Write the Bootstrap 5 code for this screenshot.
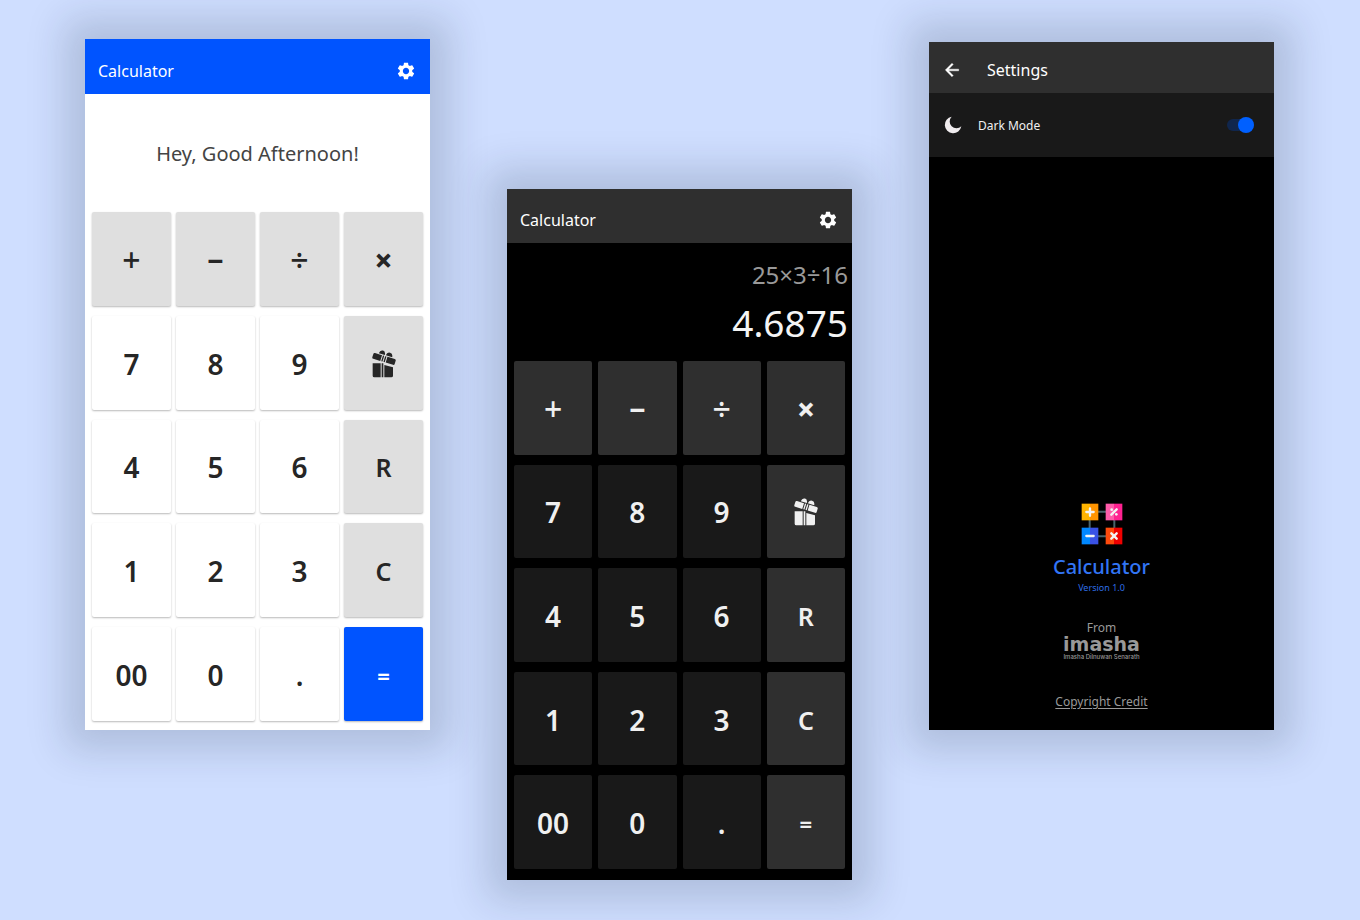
<!DOCTYPE html>
<html lang="en">
<head>
<meta charset="utf-8">
<meta name="viewport" content="width=device-width, initial-scale=1">
<title>Calculator</title>
<link href="https://cdn.jsdelivr.net/npm/bootstrap@5.3.0/dist/css/bootstrap.min.css" rel="stylesheet">
<style>
body{background:#cfdeff;font-family:"Noto Sans",sans-serif;color:#262626}
.stage{display:grid;grid-template-columns:repeat(3,minmax(0,1fr));column-gap:77px;padding:39px 86px 40px 85px;align-items:start}
.phone{background:#fff;box-shadow:0 0 36px 20px rgba(19,34,55,.17)}
.phone-night{background:#000;color:#f0f0f0}
.phone-lower{margin-top:150px}
.phone-settings{margin-top:3px;min-height:688px}
.bar{background:#0054ff;color:#fff;padding:20px 14px 11px 13px;font-size:16px;line-height:24px}
.phone-night .bar{background:#2f2f2f;padding-top:19px}
.phone-settings .bar{padding:16px 14px 11px 13px;column-gap:25px}
.bar-title{font-size:16px;line-height:24px;font-weight:400}
.plain{background:none;border:0;padding:0;color:inherit;display:flex}
.screen{min-height:118px}
.greeting{font-size:20px;color:#444;padding-top:2px}
.readout{padding:16px 4px 14px;text-align:right}
.history{font-size:24px;line-height:32px;color:#999}
.result{font-size:37px;line-height:48px;margin-top:8px;color:#f4f4f4}
.keys{display:grid;grid-template-columns:repeat(4,1fr);grid-template-rows:repeat(5,1fr);gap:10px 5px;padding:0 7px;margin-bottom:9px;min-height:509px}
.phone-night .keys{column-gap:6px;margin-bottom:11px;min-height:508px}
.key{border:0;border-radius:2px;padding:2px 0 0;background:#fff;color:#262626;font-size:28px;line-height:36px;font-weight:600;box-shadow:0 1px 2px rgba(0,0,0,.28);display:flex;align-items:center;justify-content:center}
.key-op{background:#dfdfdf}
.key-sign{font-size:32px;font-weight:500}
.key-bold{font-weight:800}
.key-letter{font-size:25px}
.key-equal{background:#0054ff;color:#fff;font-size:22px;font-weight:700}
.phone-night .key{background:#191919;color:#f0f0f0;box-shadow:none}
.phone-night .key-op,.phone-night .key-equal{background:#2f2f2f}
.setting{background:#191919;min-height:64px;padding:0 20px 0 15px;font-size:12px}
.setting label{padding-top:2px}
.toggle{appearance:none;position:relative;width:27px;height:12px;margin:0;border-radius:6px;background:#10264d}
.toggle::before{content:"";position:absolute;right:0;top:-2px;width:16px;height:16px;border-radius:50%;background:#0060ff}
.toggle:not(:checked)::before{right:auto;left:0;background:#aaa}
.about{color:#999;padding-bottom:20px}
.app-name{font-size:20px;line-height:28px;font-weight:500;color:#3275f5;margin:8px 0 0}
.version{font-size:9px;line-height:14px;color:#2f6ee6}
.from{font-size:12px;line-height:14px;margin-top:26px}
.maker{font-family:"DejaVu Sans",sans-serif;font-weight:700;font-size:19px;line-height:18px}
.maker-full{font-family:Inter,sans-serif;font-size:6px;line-height:8px;font-weight:500}
.credit{font-size:12px;line-height:16px;margin-top:33px;color:#999;text-underline-offset:2px}
</style>
</head>
<body>
<svg class="d-none" aria-hidden="true">
<symbol id="gear" viewBox="0 0 24 24"><path fill="currentColor" d="M19.43 12.98c.04-.32.07-.64.07-.98s-.03-.66-.07-.98l2.11-1.65c.19-.15.24-.42.12-.64l-2-3.46c-.12-.22-.39-.3-.61-.22l-2.49 1c-.52-.4-1.08-.73-1.69-.98l-.38-2.65C14.46 2.18 14.25 2 14 2h-4c-.25 0-.46.18-.49.42l-.38 2.65c-.61.25-1.17.59-1.69.98l-2.49-1c-.23-.09-.49 0-.61.22l-2 3.46c-.13.22-.07.49.12.64l2.11 1.65c-.04.32-.07.65-.07.98s.03.66.07.98l-2.11 1.65c-.19.15-.24.42-.12.64l2 3.46c.12.22.39.3.61.22l2.49-1c.52.4 1.08.73 1.69.98l.38 2.65c.03.24.24.42.49.42h4c.25 0 .46-.18.49-.42l.38-2.65c.61-.25 1.17-.59 1.69-.98l2.49 1c.23.09.49 0 .61-.22l2-3.46c.12-.22.07-.49-.12-.64l-2.11-1.65zM12 15.8c-2.1 0-3.8-1.7-3.8-3.8s1.7-3.8 3.8-3.8 3.8 1.7 3.8 3.8-1.7 3.8-3.8 3.8z"/></symbol>
<symbol id="gift" viewBox="0 0 72 84"><g fill="currentColor">
<path d="M2 40h24v42H7q-5 0-5-5zM29 40h5v42h-5zM37 45l26 7v25q0 5-5 5H37z"/>
<g transform="rotate(17 37 27)"><path d="M5 18h22v18H5q-4 0-4-4V22q0-4 4-4zM30 18h4v18h-4zM37 18h4v18h-4zM44 18h23q4 0 4 4v10q0 4-4 4H44z"/>
<path d="M16 15q1-11 10-11 8 0 9 11zM38 15q1-11 10-11 9 0 10 11z"/></g></g></symbol>
</svg>

<main class="stage">
<section class="phone" aria-label="Calculator, light">
<header class="bar d-flex align-items-center justify-content-between"><span class="bar-title">Calculator</span><button class="plain" type="button" aria-label="Settings"><svg width="20" height="20"><use href="#gear"/></svg></button></header>
<div class="screen greeting d-flex align-items-center justify-content-center">Hey, Good Afternoon!</div>
<div class="keys">
<button class="key key-op key-sign">+</button><button class="key key-op key-bold">−</button><button class="key key-op key-sign">÷</button><button class="key key-op key-sign key-bold">×</button>
<button class="key">7</button><button class="key">8</button><button class="key">9</button><button class="key key-op" aria-label="Gift"><svg width="24" height="28"><use href="#gift"/></svg></button>
<button class="key">4</button><button class="key">5</button><button class="key">6</button><button class="key key-op key-letter">R</button>
<button class="key">1</button><button class="key">2</button><button class="key">3</button><button class="key key-op key-letter">C</button>
<button class="key">00</button><button class="key">0</button><button class="key">.</button><button class="key key-equal">=</button>
</div>
</section>

<section class="phone phone-night phone-lower" aria-label="Calculator, dark">
<header class="bar d-flex align-items-center justify-content-between"><span class="bar-title">Calculator</span><button class="plain" type="button" aria-label="Settings"><svg width="20" height="20"><use href="#gear"/></svg></button></header>
<div class="screen readout"><div class="history">25×3÷16</div><div class="result">4.6875</div></div>
<div class="keys">
<button class="key key-op key-sign">+</button><button class="key key-op key-bold">−</button><button class="key key-op key-sign">÷</button><button class="key key-op key-sign key-bold">×</button>
<button class="key">7</button><button class="key">8</button><button class="key">9</button><button class="key key-op" aria-label="Gift"><svg width="24" height="28"><use href="#gift"/></svg></button>
<button class="key">4</button><button class="key">5</button><button class="key">6</button><button class="key key-op key-letter">R</button>
<button class="key">1</button><button class="key">2</button><button class="key">3</button><button class="key key-op key-letter">C</button>
<button class="key">00</button><button class="key">0</button><button class="key">.</button><button class="key key-equal">=</button>
</div>
</section>

<section class="phone phone-night phone-settings d-flex flex-column" aria-label="Settings">
<header class="bar d-flex align-items-center"><button class="plain" type="button" aria-label="Back"><svg width="20" height="20" viewBox="0 0 24 24"><path fill="currentColor" stroke="currentColor" stroke-width=".5" d="M20 11H7.83l5.59-5.59L12 4l-8 8 8 8 1.41-1.41L7.83 13H20z"/></svg></button><span class="bar-title">Settings</span></header>
<div class="setting d-flex align-items-center">
<svg class="me-3" width="18" height="18" viewBox="0 0 54 54"><path fill="#f0ecee" d="M23 2A25 25 0 1 0 52 31 20 20 0 0 1 23 2z"/></svg>
<label class="flex-grow-1" for="dark">Dark Mode</label>
<input class="toggle" id="dark" type="checkbox" role="switch" checked>
</div>
<div class="about d-flex flex-column align-items-center mt-auto">
<svg width="42" height="42" viewBox="0 0 126 126" aria-hidden="true">
<path d="M26 26h74v74H26z" fill="none" stroke="#49636b" stroke-width="6"/>
<path fill="#ffb400" d="M2 2h25v50H2z"/><path fill="#ff9400" d="M27 2h25v50H27z"/>
<path fill="#ff5ba9" d="M74 2h25v50H74z"/><path fill="#ff2291" d="M99 2h25v50H99z"/>
<path fill="#0088ff" d="M2 74h25v50H2z"/><path fill="#3a52e6" d="M27 74h25v50H27z"/>
<path fill="#ff4a0c" d="M74 74h25v50H74z"/><path fill="#f00000" d="M99 74h25v50H99z"/>
<g stroke="#f4f4f4" stroke-width="7" stroke-linecap="round" fill="none"><path d="M27 16v22M16 27h22M16 99h22M91 35l16-16M91 91l16 16M107 91l-16 16"/></g>
<circle cx="92" cy="20" r="4" fill="#f4f4f4"/><circle cx="106" cy="34" r="4" fill="#f4f4f4"/>
</svg>
<h1 class="app-name">Calculator</h1>
<div class="version">Version 1.0</div>
<div class="from">From</div>
<div class="maker">imasha</div>
<div class="maker-full">Imasha Dilnuwan Senarath</div>
<a class="credit" href="#">Copyright Credit</a>
</div>
</section>
</main>
<script src="https://cdn.jsdelivr.net/npm/bootstrap@5.3.0/dist/js/bootstrap.bundle.min.js"></script>
</body>
</html>
